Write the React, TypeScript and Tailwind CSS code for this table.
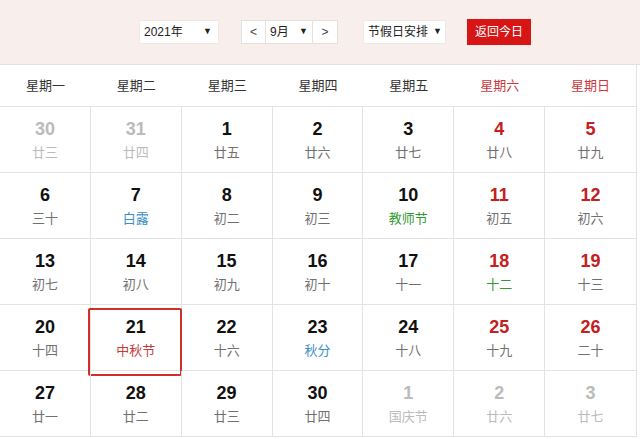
import React from "react";

type Cell = { d: number; l: string; kind?: "other" | "normal"; lc?: string; weekend?: boolean; sel?: boolean };

const rows: Cell[][] = [
  [
    { d: 30, l: "廿三", kind: "other" },
    { d: 31, l: "廿四", kind: "other" },
    { d: 1, l: "廿五" },
    { d: 2, l: "廿六" },
    { d: 3, l: "廿七" },
    { d: 4, l: "廿八", weekend: true },
    { d: 5, l: "廿九", weekend: true },
  ],
  [
    { d: 6, l: "三十" },
    { d: 7, l: "白露", lc: "text-[#3b8fc6]" },
    { d: 8, l: "初二" },
    { d: 9, l: "初三" },
    { d: 10, l: "教师节", lc: "text-[#2f9a2f]" },
    { d: 11, l: "初五", weekend: true },
    { d: 12, l: "初六", weekend: true },
  ],
  [
    { d: 13, l: "初七" },
    { d: 14, l: "初八" },
    { d: 15, l: "初九" },
    { d: 16, l: "初十" },
    { d: 17, l: "十一" },
    { d: 18, l: "十二", weekend: true, lc: "text-[#2f9a2f]" },
    { d: 19, l: "十三", weekend: true },
  ],
  [
    { d: 20, l: "十四" },
    { d: 21, l: "中秋节", lc: "text-[#c43a3a]", sel: true },
    { d: 22, l: "十六" },
    { d: 23, l: "秋分", lc: "text-[#3b8fc6]" },
    { d: 24, l: "十八" },
    { d: 25, l: "十九", weekend: true },
    { d: 26, l: "二十", weekend: true },
  ],
  [
    { d: 27, l: "廿一" },
    { d: 28, l: "廿二" },
    { d: 29, l: "廿三" },
    { d: 30, l: "廿四" },
    { d: 1, l: "国庆节", kind: "other" },
    { d: 2, l: "廿六", kind: "other" },
    { d: 3, l: "廿七", kind: "other" },
  ],
];

const weekdays = ["星期一", "星期二", "星期三", "星期四", "星期五", "星期六", "星期日"];

const cjk = { fontFamily: '"Liberation Sans", "Noto Sans CJK SC", sans-serif' };

export default function App() {
  return (
    <div className="w-[640px] h-[439px] overflow-hidden bg-white" style={cjk}>
      <div className="h-[65px] bg-[#f8eeec] border-b border-[#e8e0de] flex items-center text-[12px] text-[#222]">
        <div className="ml-[139px] w-[80px] h-[24px] bg-white border border-[#efe7e5] flex items-center justify-between px-[4px]">
          <span>2021年</span>
          <span className="text-[9px] mr-[2px]">▼</span>
        </div>
        <div className="ml-[22px] w-[97px] h-[24px] bg-white border border-[#e8e0de] flex items-stretch">
          <div className="w-[24px] flex items-center justify-center border-r border-[#e8e0de] text-[#444]">&lt;</div>
          <div className="flex-1 flex items-center justify-between px-[4px] border-r border-[#e8e0de]">
            <span>9月</span>
            <span className="text-[9px]">▼</span>
          </div>
          <div className="w-[24px] flex items-center justify-center text-[#444]">&gt;</div>
        </div>
        <div className="ml-[25px] w-[83px] h-[24px] bg-white border border-[#efe7e5] flex items-center justify-between pl-[4px] pr-[3px]">
          <span>节假日安排</span>
          <span className="text-[9px]">▼</span>
        </div>
        <div className="ml-[21px] w-[64px] h-[26px] bg-[#d81515] text-white flex items-center justify-center text-[12px]">
          返回今日
        </div>
      </div>
      <div className="w-[637px] border-r border-[#e3e3e3]">
        <div className="grid grid-cols-7 h-[42px] border-b border-[#e3e3e3]">
          {weekdays.map((w, i) => (
            <div
              key={w}
              className={`flex items-center justify-center text-[13px] ${i >= 5 ? "text-[#c9393d]" : "text-[#333]"}`}
            >
              {w}
            </div>
          ))}
        </div>
        {rows.map((r, ri) => (
          <div key={ri} className="grid grid-cols-7 h-[66px] border-b border-[#e3e3e3]">
            {r.map((c, ci) => {
              const numColor =
                c.kind === "other" ? "text-[#bbbbbb]" : c.weekend ? "text-[#c42020]" : "text-[#111]";
              const lunColor = c.kind === "other" ? "text-[#bbbbbb]" : c.lc ?? "text-[#707070]";
              return (
                <div
                  key={ci}
                  className={`relative flex flex-col items-center justify-center ${ci < 6 ? "border-r border-[#e3e3e3]" : ""}`}
                >
                  <div className={`text-[18px] leading-[20px] font-bold ${numColor}`}>{c.d}</div>
                  <div className={`mt-[5px] text-[13px] leading-[17px] ${lunColor}`}>{c.l}</div>
                  {c.sel && (
                    <div className="absolute left-[-3px] right-[-1px] top-[3px] bottom-[-6px] border-2 border-[#d0302c] rounded-[2px]" />
                  )}
                </div>
              );
            })}
          </div>
        ))}
      </div>
    </div>
  );
}
